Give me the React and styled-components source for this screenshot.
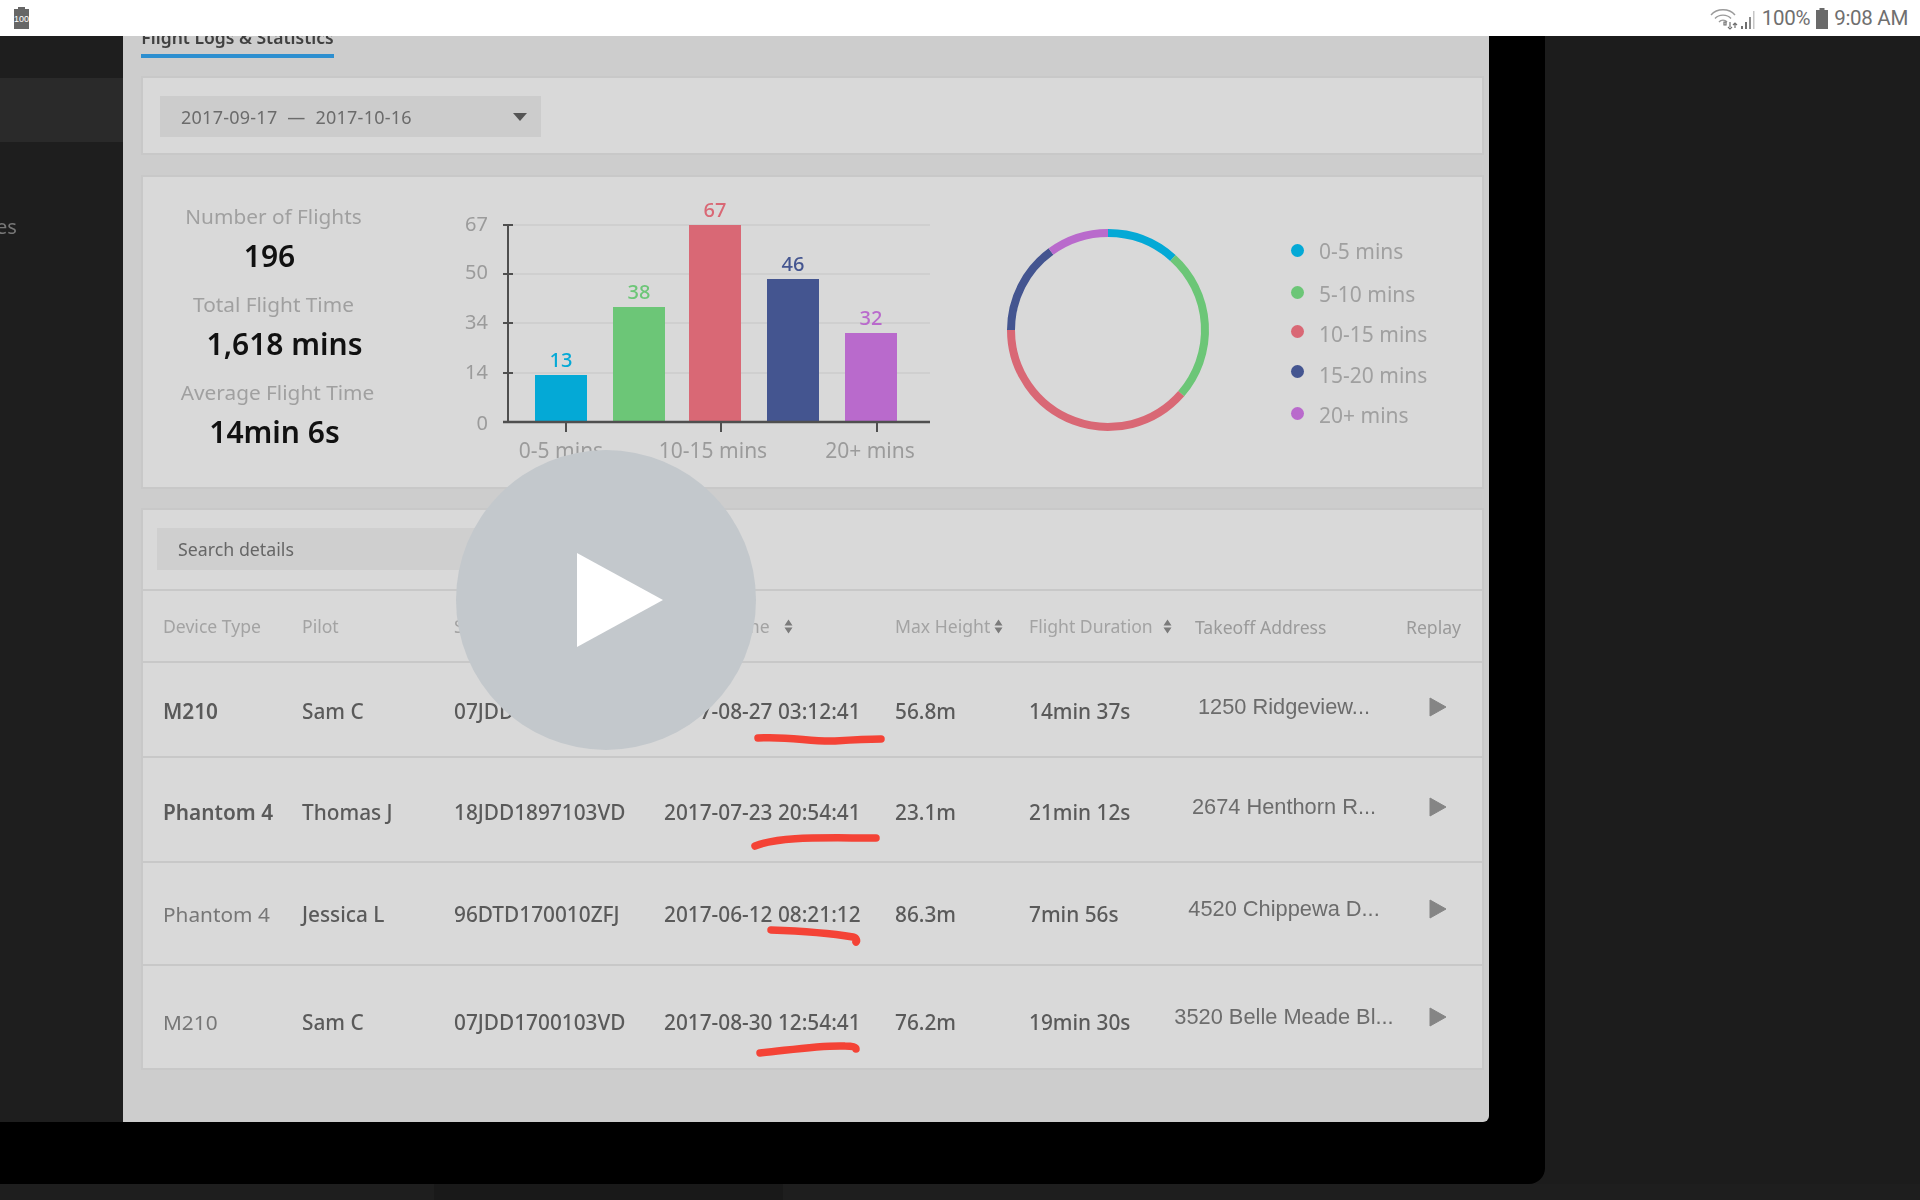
import React from "react";
import styled, { createGlobalStyle } from "styled-components";

const GlobalStyle = createGlobalStyle`
  html, body {
    margin: 0;
    padding: 0;
    background: #1c1c1c;
  }
  * {
    box-sizing: border-box;
  }
`;

const COLORS = {
  blue: "#04a9d6",
  green: "#6cc677",
  pink: "#d96875",
  navy: "#445590",
  purple: "#b96acc",
};

const bars = [
  { value: 13, x: 535, top: 375, color: COLORS.blue },
  { value: 38, x: 613, top: 307, color: COLORS.green },
  { value: 67, x: 689, top: 225, color: COLORS.pink },
  { value: 46, x: 767, top: 279, color: COLORS.navy },
  { value: 32, x: 845, top: 333, color: COLORS.purple },
];

const yTicks = [
  { label: "67", y: 225, textY: 231 },
  { label: "50", y: 274, textY: 279 },
  { label: "34", y: 323, textY: 329 },
  { label: "14", y: 373, textY: 379 },
  { label: "0", y: 422, textY: 430 },
];

const xTicks = [
  { label: "0-5 mins", x: 566, textX: 561 },
  { label: "10-15 mins", x: 721, textX: 713 },
  { label: "20+ mins", x: 877, textX: 870 },
];

const donut = [
  { from: 0, to: 42, color: COLORS.blue },
  { from: 42, to: 131, color: COLORS.green },
  { from: 131, to: 270, color: COLORS.pink },
  { from: 270, to: 324, color: COLORS.navy },
  { from: 324, to: 360, color: COLORS.purple },
];

const legend = [
  { label: "0-5 mins", color: COLORS.blue, gap: 0, nudge: 0 },
  { label: "5-10 mins", color: COLORS.green, gap: 20, nudge: 1 },
  { label: "10-15 mins", color: COLORS.pink, gap: 17, nudge: 2 },
  { label: "15-20 mins", color: COLORS.navy, gap: 18, nudge: 3 },
  { label: "20+ mins", color: COLORS.purple, gap: 20, nudge: 1 },
];

const stats = [
  { label: "Number of Flights", value: "196", labelShift: 0, valueShift: -4 },
  { label: "Total Flight Time", value: "1,618 mins", labelShift: 0, valueShift: 11 },
  { label: "Average Flight Time", value: "14min 6s", labelShift: 4, valueShift: 1 },
];

const columns = [
  { label: "Device Type" },
  { label: "Pilot" },
  { label: "Serial Number" },
  { label: "Takeoff Time", sort: true, gap: 14 },
  { label: "Max Height", sort: true, gap: 4 },
  { label: "Flight Duration", sort: true, gap: 10 },
];

const rows = [
  { device: "M210", strong: true, pilot: "Sam C", serial: "07JDD1700103VD", time: "2017-08-27 03:12:41", height: "56.8m", duration: "14min 37s", address: "1250 Ridgeview...", size: 95, textShift: 3, addrShift: -3 },
  { device: "Phantom 4", strong: true, pilot: "Thomas J", serial: "18JDD1897103VD", time: "2017-07-23 20:54:41", height: "23.1m", duration: "21min 12s", address: "2674 Henthorn R...", size: 105, textShift: 5, addrShift: -3 },
  { device: "Phantom 4", strong: false, pilot: "Jessica L", serial: "96DTD170010ZFJ", time: "2017-06-12 08:21:12", height: "86.3m", duration: "7min 56s", address: "4520 Chippewa D...", size: 103, textShift: 1, addrShift: -5 },
  { device: "M210", strong: false, pilot: "Sam C", serial: "07JDD1700103VD", time: "2017-08-30 12:54:41", height: "76.2m", duration: "19min 30s", address: "3520 Belle Meade Bl...", size: 103, textShift: 9, addrShift: -1 },
];

const polar = (angle, r) => {
  const rad = (angle * Math.PI) / 180;
  return [1108 + r * Math.sin(rad), 330 - r * Math.cos(rad)];
};

const arcPath = (from, to, r) => {
  const [x1, y1] = polar(from, r);
  const [x2, y2] = polar(to, r);
  return `M${x1} ${y1}A${r} ${r} 0 ${to - from > 180 ? 1 : 0} 1 ${x2} ${y2}`;
};

function BarChart() {
  return (
    <ChartSvg viewBox="450 190 500 280">
      {yTicks.slice(0, 4).map((t) => (
        <line key={t.label} x1="508" x2="930" y1={t.y} y2={t.y} stroke="#cbcbcb" strokeWidth="1.5" />
      ))}
      {bars.map((b) => (
        <g key={b.value}>
          <rect x={b.x} y={b.top} width="52" height={422 - b.top} fill={b.color} />
          <text x={b.x + 26} y={b.top - 8} fill={b.color} fontSize="20" fontWeight="500" textAnchor="middle">{b.value}</text>
        </g>
      ))}
      <line x1="508" x2="508" y1="224" y2="423" stroke="#4f4f4f" strokeWidth="2" />
      <line x1="503" x2="930" y1="422" y2="422" stroke="#4f4f4f" strokeWidth="2.5" />
      {yTicks.map((t) => (
        <g key={t.label}>
          <line x1="503" x2="513" y1={t.y} y2={t.y} stroke="#4f4f4f" strokeWidth="2" />
          <text x="488" y={t.textY} fill="#9b9b9b" fontSize="20" textAnchor="end">{t.label}</text>
        </g>
      ))}
      {xTicks.map((t) => (
        <g key={t.label}>
          <line x1={t.x} x2={t.x} y1="422" y2="432" stroke="#4f4f4f" strokeWidth="2" />
          <text x={t.textX} y="458" fill="#9b9b9b" fontSize="21" textAnchor="middle">{t.label}</text>
        </g>
      ))}
    </ChartSvg>
  );
}

function Donut() {
  return (
    <DonutSvg viewBox="1000 222 216 216">
      {donut.map((s) => (
        <path key={s.color} d={arcPath(s.from, s.to, 97)} fill="none" stroke={s.color} strokeWidth="8" />
      ))}
    </DonutSvg>
  );
}

function SortIcon() {
  return (
    <SortSvg viewBox="0 0 9 15">
      <path d="M4.5 0.5L8.5 6.5H0.5ZM4.5 14.5L0.5 8.5H8.5Z" fill="#7b7b7b" />
    </SortSvg>
  );
}

function PlayIcon() {
  return (
    <svg width="18" height="20" viewBox="0 0 18 20">
      <path d="M1 1L17 10L1 19Z" fill="#858585" stroke="#858585" strokeLinejoin="round" />
    </svg>
  );
}

function StatusBarRight() {
  return (
    <StatusRight>
      <svg width="46" height="24" viewBox="0 0 46 24">
        <g fill="none" stroke="#9a9a9a" strokeWidth="1.4">
          <path d="M1 9C7 2 19 2 25 9" />
          <path d="M5 12.5C9 8 17 8 21 12.5" />
          <path d="M9 16C11 13.5 15 13.5 17 16" />
        </g>
        <path d="M14 19h2v-3h-2zM20 16v5M22 21l-2 2-2-2M25 22v-5M23 19l2-2 2 2" fill="none" stroke="#6f6f6f" strokeWidth="1.2" />
        <path d="M31 20h2v3h-2zM35 16h2v7h-2z" fill="#6f6f6f" />
        <path d="M39 11h2v12h-2z" fill="#8a8a8a" />
        <path d="M43 5h1.5v18H43z" fill="#c6c6c6" />
      </svg>
      <StatusText>100%</StatusText>
      <svg width="12" height="21" viewBox="0 0 12 21">
        <path d="M3.5 0h5v2H12v19H0V2h3.5z" fill="#6a6a6a" />
      </svg>
      <StatusText>9:08 AM</StatusText>
    </StatusRight>
  );
}

export default function App() {
  return (
    <Page>
      <GlobalStyle />
      <StatusBar>
        <BatteryChip>100</BatteryChip>
        <StatusBarRight />
      </StatusBar>
      <Device>
        <Sidebar>
          <SideActive />
          <SideLabel>es</SideLabel>
        </Sidebar>
        <Panel>
          <Tab>Flight Logs &amp; Statistics</Tab>
          <FilterCard>
            <DateSelect>
              <span>2017-09-17&nbsp; —&nbsp; 2017-10-16</span>
              <Caret />
            </DateSelect>
          </FilterCard>
          <StatsCard>
            <StatsColumn>
              {stats.map((s) => (
                <StatBlock key={s.label}>
                  <StatLabel $shift={s.labelShift}>{s.label}</StatLabel>
                  <StatValue $shift={s.valueShift}>{s.value}</StatValue>
                </StatBlock>
              ))}
            </StatsColumn>
            <BarChart />
            <Donut />
            <Legend>
              {legend.map((l) => (
                <LegendRow key={l.label} $gap={l.gap}>
                  <LegendDot $color={l.color} />
                  <LegendText $nudge={l.nudge}>{l.label}</LegendText>
                </LegendRow>
              ))}
            </Legend>
          </StatsCard>
          <TableCard>
            <SearchArea>
              <SearchInput>Search details</SearchInput>
            </SearchArea>
            <HeaderRow>
              {columns.map((c) => (
                <HeaderCell key={c.label} $gap={c.gap}>
                  {c.label}
                  {c.sort && <SortIcon />}
                </HeaderCell>
              ))}
              <AddressHeader>Takeoff Address</AddressHeader>
              <ReplayHeader>Replay</ReplayHeader>
            </HeaderRow>
            {rows.map((r, i) => (
              <DataRow key={i} $size={r.size}>
                <DeviceCell $shift={r.textShift} $strong={r.strong}>{r.device}</DeviceCell>
                <Cell $shift={r.textShift}>{r.pilot}</Cell>
                <Cell $shift={r.textShift}>{r.serial}</Cell>
                <Cell $shift={r.textShift}>{r.time}</Cell>
                <Cell $shift={r.textShift}>{r.height}</Cell>
                <Cell $shift={r.textShift}>{r.duration}</Cell>
                <AddressCell $shift={r.addrShift}>{r.address}</AddressCell>
                <ReplayCell $shift={r.addrShift}><PlayIcon /></ReplayCell>
              </DataRow>
            ))}
          </TableCard>
        </Panel>
      </Device>
      <BottomStrip>
        <StripPart $w={434} />
        <StripPart $w={349} $dark />
        <StripPart $w={1137} />
      </BottomStrip>

      <Annotations viewBox="0 0 1920 1200">
        <path d="M758 738C790 736 810 742 835 741C850 740 870 739 881 739" />
        <path d="M755 846C780 836 820 838 876 838" />
        <path d="M771 930C800 931 835 934 853 937C857 938 857 941 856 942" />
        <path d="M760 1053C790 1050 820 1045 845 1046C853 1046 856 1047 856 1049" />
      </Annotations>
      <PlayOverlay>
        <svg width="86" height="94" viewBox="0 0 86 94">
          <path d="M0 0L86 47L0 94Z" fill="#fff" />
        </svg>
      </PlayOverlay>
    </Page>
  );
}

const Page = styled.div`
  position: relative;
  width: 1920px;
  height: 1200px;
  overflow: hidden;
  background: #1c1c1c;
  font-family: "Noto Sans", "Open Sans", sans-serif;
`;

const StatusBar = styled.div`
  height: 36px;
  background: #fff;
  display: flex;
  align-items: center;
  justify-content: space-between;
  padding: 0 12px 0 14px;
`;

const BatteryChip = styled.div`
  position: relative;
  width: 15px;
  height: 20px;
  margin-top: 2px;
  background: #666;
  color: #fff;
  font: 9px "Liberation Sans", sans-serif;
  text-align: center;
  line-height: 20px;

  &::before {
    content: "";
    position: absolute;
    left: 4px;
    top: -2px;
    width: 7px;
    height: 2px;
    background: #666;
  }
`;

const StatusRight = styled.div`
  display: flex;
  align-items: center;
  gap: 6px;
`;

const StatusText = styled.span`
  font: 20.5px Roboto, sans-serif;
  color: #6f6f6f;
  letter-spacing: -0.3px;
`;

const Device = styled.div`
  width: 1545px;
  height: 1148px;
  background: #000;
  border-bottom-right-radius: 16px;
  display: flex;
  align-items: flex-start;
`;

const Sidebar = styled.div`
  width: 123px;
  height: 1086px;
  background: #1e1e1e;
  padding-top: 42px;
  overflow: hidden;
  filter: blur(0.6px);
`;

const SideActive = styled.div`
  height: 64px;
  background: #2a2a2a;
`;

const SideLabel = styled.div`
  margin: 70px 0 0 -4px;
  font-size: 20px;
  line-height: 30px;
  color: #777;
`;

const Panel = styled.div`
  width: 1366px;
  height: 1086px;
  background: #cdcdcd;
  border-bottom-right-radius: 6px;
  padding: 0 5px 0 18px;
  filter: blur(0.7px);
  overflow: hidden;
`;

const Tab = styled.div`
  width: 193px;
  height: 22px;
  border-bottom: 4px solid #2d8fd0;
  color: #404040;
  font-size: 17.5px;
  font-weight: 600;
  line-height: 3px;
  white-space: nowrap;
  text-align: center;
`;

const Card = styled.div`
  background: #d9d9d9;
  border: 2px solid #c8c8c8;
`;

const FilterCard = styled(Card)`
  height: 79px;
  margin-top: 18px;
  padding: 18px 17px;
`;

const DateSelect = styled.div`
  width: 381px;
  height: 41px;
  background: #cccccc;
  display: flex;
  align-items: center;
  justify-content: space-between;
  padding: 0 14px 0 21px;
  font-size: 18px;
  letter-spacing: 0.25px;
  color: #6b6b6b;
`;

const Caret = styled.div`
  width: 0;
  height: 0;
  border-left: 7px solid transparent;
  border-right: 7px solid transparent;
  border-top: 8px solid #555;
`;

const StatsCard = styled(Card)`
  height: 314px;
  margin-top: 20px;
  display: flex;
  align-items: flex-start;
`;

const StatsColumn = styled.div`
  width: 261px;
  padding-top: 19px;
  flex-shrink: 0;
`;

const StatBlock = styled.div`
  height: 88px;
  text-align: center;
`;

const StatLabel = styled.div`
  height: 40px;
  line-height: 40px;
  font-size: 20.8px;
  color: #a0a0a0;
  transform: translateX(${(p) => p.$shift}px);
`;

const StatValue = styled.div`
  height: 48px;
  line-height: 40px;
  font-size: 30px;
  font-weight: 600;
  color: #111;
  transform: translateX(${(p) => p.$shift}px);
`;

const ChartSvg = styled.svg`
  width: 500px;
  height: 280px;
  margin: 13px 0 0 46px;
  flex-shrink: 0;
  font-family: "Noto Sans", sans-serif;
`;

const DonutSvg = styled.svg`
  width: 216px;
  height: 216px;
  margin: 45px 0 0 50px;
  flex-shrink: 0;
`;

const Legend = styled.div`
  margin: 63px 0 0 75px;
`;

const LegendRow = styled.div`
  display: flex;
  align-items: flex-start;
  gap: 15px;
  height: 22px;
  margin-top: ${(p) => p.$gap}px;
`;

const LegendDot = styled.div`
  width: 13px;
  height: 13px;
  margin-top: 4px;
  border-radius: 50%;
  background: ${(p) => p.$color};
`;

const LegendText = styled.div`
  font-size: 21px;
  line-height: 22px;
  color: #a0a0a0;
  white-space: nowrap;
  transform: translateY(${(p) => p.$nudge}px);
`;

const TableCard = styled(Card)`
  height: 562px;
  margin-top: 19px;
`;

const SearchArea = styled.div`
  height: 81px;
  padding: 18px 14px;
  border-bottom: 2px solid #c8c8c8;
`;

const SearchInput = styled.div`
  width: 400px;
  height: 42px;
  background: #cfcfcf;
  padding-left: 21px;
  line-height: 42px;
  font-size: 17.8px;
  color: #666;
`;

const gridColumns = "139px 152px 210px 231px 134px 139px 232px 1fr";

const HeaderRow = styled.div`
  display: grid;
  grid-template-columns: ${gridColumns};
  align-items: center;
  height: 72px;
  padding-left: 20px;
  border-bottom: 2px solid #c8c8c8;
`;

const HeaderCell = styled.div`
  display: flex;
  align-items: center;
  gap: ${(p) => p.$gap ?? 8}px;
  font-size: 17.6px;
  color: #a3a3a3;
  white-space: nowrap;
`;

const SortSvg = styled.svg`
  width: 9px;
  height: 15px;
  flex-shrink: 0;
`;

const AddressHeader = styled(HeaderCell)`
  padding: 2px 0 0 27px;
  color: #9a9a9a;
`;

const ReplayHeader = styled(HeaderCell)`
  padding: 2px 0 0 6px;
  color: #9a9a9a;
`;

const DataRow = styled.div`
  display: grid;
  grid-template-columns: ${gridColumns};
  align-items: center;
  height: ${(p) => p.$size}px;
  padding-left: 20px;
  border-bottom: 2px solid #c8c8c8;

  &:last-child {
    border-bottom: 0;
  }
`;

const Cell = styled.div`
  padding-top: ${(p) => p.$shift}px;
  font-size: 20.8px;
  font-weight: 500;
  color: #5a5a5a;
  white-space: nowrap;
`;

const DeviceCell = styled(Cell)`
  font-weight: ${(p) => (p.$strong ? 600 : 400)};
  color: ${(p) => (p.$strong ? "#5a5a5a" : "#777")};
`;

const AddressCell = styled.div`
  transform: translateY(${(p) => p.$shift}px);
  text-align: center;
  font: 21.8px "Liberation Sans", sans-serif;
  color: #6c6c6c;
  white-space: nowrap;
`;

const ReplayCell = styled.div`
  transform: translateY(${(p) => p.$shift}px);
  display: flex;
  padding-left: 29px;
`;

const BottomStrip = styled.div`
  display: flex;
  height: 16px;
`;

const StripPart = styled.div`
  width: ${(p) => p.$w}px;
  background: ${(p) => (p.$dark ? "#191919" : "#1e1e1e")};
`;

const Annotations = styled.svg`
  position: absolute;
  left: 0;
  top: 0;
  width: 1920px;
  height: 1200px;
  pointer-events: none;

  path {
    fill: none;
    stroke: #f44336;
    stroke-width: 7.5;
    stroke-linecap: round;
  }
`;

const PlayOverlay = styled.div`
  position: absolute;
  left: 456px;
  top: 450px;
  width: 300px;
  height: 300px;
  border-radius: 50%;
  background: #c3c8cc;
  display: flex;
  align-items: center;
  justify-content: center;

  svg {
    margin-left: 28px;
  }
`;
